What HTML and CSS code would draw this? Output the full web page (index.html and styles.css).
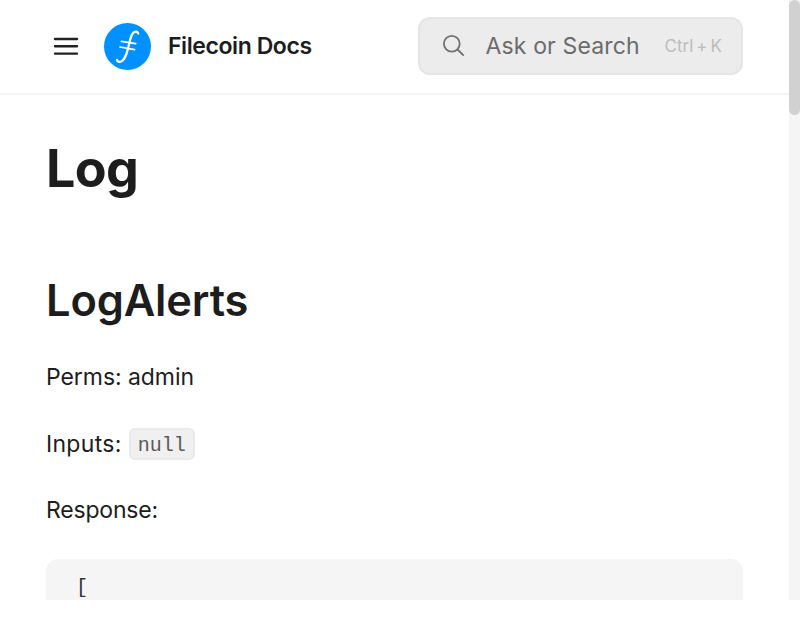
FILE: index.html
```
<!DOCTYPE html>
<html lang="en">
<head>
<meta charset="utf-8">
<title>Log | Filecoin Docs</title>
<link rel="stylesheet" href="styles.css">
</head>
<body>
<div class="viewport">
  <div class="page">
    <header class="header">
      <svg class="menu" viewBox="0 0 26 20" aria-label="Menu"><path d="M2 2H24M2 9.3H24M2 16.6H24"/></svg>
      <svg class="logo" viewBox="0 0 47 47">
        <circle cx="23.5" cy="23.5" r="23.5"/>
        <path class="stem" d="M34.2 10.6C33.5 7.6 29.7 8 27.9 11.7C25.7 16 24.7 25 22.2 31.5C20.2 37 17.3 39.7 14.5 38.6C13.6 38.2 13.1 37.6 13 37"/>
        <path class="bars" d="M17.3 18.3L31.7 20.7M16 24L30.6 26.6"/>
      </svg>
      <span class="brand">Filecoin Docs</span>
      <div class="search">
        <svg class="glass" viewBox="0 0 22 22"><circle cx="8.8" cy="8.8" r="7.9"/><path d="M14.5 14.5L20.7 20.7"/></svg>
        <span class="placeholder">Ask or Search</span>
        <span class="keys"><span>Ctrl</span><span>+</span><span>K</span></span>
      </div>
    </header>
    <main class="content">
      <h1>Log</h1>
      <h2>LogAlerts</h2>
      <p class="perms">Perms: admin</p>
      <p class="inputs"><span>Inputs:</span><code>null</code></p>
      <p class="response">Response:</p>
      <pre>[</pre>
    </main>
  </div>
  <div class="scrollbar"><div class="thumb"></div></div>
</div>
</body>
</html>
```
FILE: styles.css
```
* { box-sizing: border-box; }
body {
  margin: 0;
  background: #fff;
  color: #1d1d1d;
  font-family: Inter, "Liberation Sans", sans-serif;
  font-size: 23px;
  overflow: hidden;
}
.viewport { display: flex; height: 600px; overflow: hidden; }
.page { flex: 1; min-width: 0; }
.header {
  display: flex;
  align-items: center;
  height: 95px;
  padding: 0 46px 2px 53px;
  border-bottom: 2px solid #f4f4f4;
}
.menu { width: 26px; height: 20px; margin-top: 2px; fill: none; stroke: #222; stroke-width: 2.4; stroke-linecap: round; }
.logo { width: 47px; height: 47px; margin: 1px 0 0 25px; fill: #0090ff; }
.logo path { fill: none; stroke: #fff; stroke-linecap: round; }
.logo .stem { stroke-width: 2.3; }
.logo .bars { stroke-width: 1.7; }
.brand { margin-left: 17px; font-weight: 600; letter-spacing: -0.42px; white-space: nowrap; }
.search {
  display: flex;
  align-items: center;
  width: 325px;
  height: 58px;
  margin-left: auto;
  padding: 0 19px 0 23px;
  border: 2px solid #e5e5e5;
  border-radius: 12px;
  background: #ececec;
  color: #6b6b6b;
  white-space: nowrap;
}
.glass { width: 22px; height: 22px; fill: none; stroke: #707070; stroke-width: 1.8; }
.placeholder { margin-left: 20.5px; letter-spacing: 0.14px; }
.keys { display: flex; gap: 3px; margin: 1px 0 0 auto; font-size: 17px; color: #bcbcbc; }
.content { padding: 0 46px; }
h1, h2, p, pre { margin: 0; }
h1 { margin-top: 41px; font-size: 52px; line-height: 65px; font-weight: 700; letter-spacing: -0.6px; }
h2 { margin-top: 70px; font-size: 43.4px; line-height: 58px; font-weight: 600; letter-spacing: -0.15px; }
p { line-height: 36px; }
.perms { margin-top: 30px; letter-spacing: -0.06px; }
.inputs { display: flex; gap: 7px; height: 36px; margin-top: 31px; letter-spacing: 0.3px; }
.response { margin-top: 30px; letter-spacing: -0.2px; }
code {
  height: 32px;
  margin-top: 2px;
  padding: 0 7px;
  border: 2px solid #e9e9e9;
  border-radius: 6px;
  background: #f0f0f0;
  color: #5a5a5a;
  font: 20px/32px "Liberation Mono", monospace;
  letter-spacing: 0;
}
pre {
  height: 80px;
  margin-top: 31px;
  padding: 14px 30px;
  border-radius: 12px;
  background: #f5f5f5;
  color: #333;
  font: 20px/30px "Liberation Mono", monospace;
}
.scrollbar { width: 11px; background: #f5f5f5; }
.thumb { height: 115px; border-radius: 6px; background: #d1d1d1; }
```
